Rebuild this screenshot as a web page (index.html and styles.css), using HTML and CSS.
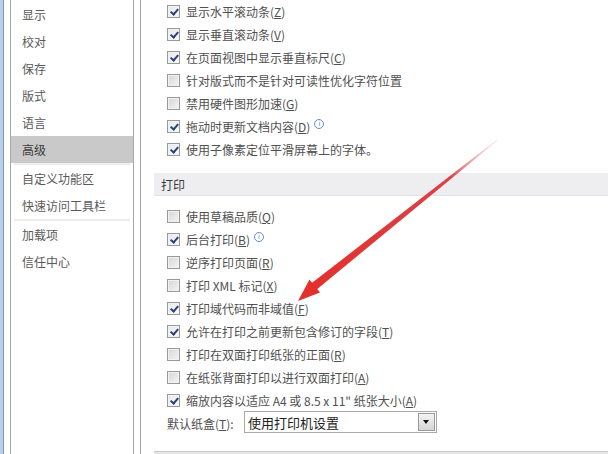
FILE: index.html
```html
<!DOCTYPE html>
<html>
    <head>
        <meta charset="utf-8">
        <title>Word 选项 - 高级</title>
        <link rel="stylesheet" href="styles.css">
    </head>
    <body>
        <div class="window">
            <div class="frame_edge"></div>
            <div class="nav">
                <ul class="nav_list">
                    <li>显示</li>
                    <li>校对</li>
                    <li>保存</li>
                    <li>版式</li>
                    <li>语言</li>
                    <li class="active">高级</li>
                    <li class="sep"></li>
                    <li>自定义功能区</li>
                    <li>快速访问工具栏</li>
                    <li class="sep"></li>
                    <li>加载项</li>
                    <li>信任中心</li>
                </ul>
            </div>
            <div class="content">
                <div class="row"><span class="cb on"></span>显示水平滚动条(<u>Z</u>)</div>
                <div class="row"><span class="cb on"></span>显示垂直滚动条(<u>V</u>)</div>
                <div class="row"><span class="cb on"></span>在页面视图中显示垂直标尺(<u>C</u>)</div>
                <div class="row"><span class="cb"></span>针对版式而不是针对可读性优化字符位置</div>
                <div class="row"><span class="cb"></span>禁用硬件图形加速(<u>G</u>)</div>
                <div class="row"><span class="cb on"></span>拖动时更新文档内容(<u>D</u>)<span class="info">i</span></div>
                <div class="row"><span class="cb on"></span>使用子像素定位平滑屏幕上的字体。</div>

                <div class="section">打印</div>

                <div class="row"><span class="cb"></span>使用草稿品质(<u>Q</u>)</div>
                <div class="row"><span class="cb on"></span>后台打印(<u>B</u>)<span class="info">i</span></div>
                <div class="row"><span class="cb"></span>逆序打印页面(<u>R</u>)</div>
                <div class="row"><span class="cb"></span>打印 XML 标记(<u>X</u>)</div>
                <div class="row"><span class="cb on"></span>打印域代码而非域值(<u>F</u>)</div>
                <div class="row"><span class="cb on"></span>允许在打印之前更新包含修订的字段(<u>T</u>)</div>
                <div class="row"><span class="cb"></span>打印在双面打印纸张的正面(<u>R</u>)</div>
                <div class="row"><span class="cb"></span>在纸张背面打印以进行双面打印(<u>A</u>)</div>
                <div class="row"><span class="cb on"></span>缩放内容以适应 A4 或 8.5 x 11" 纸张大小(<u>A</u>)</div>
                <div class="row tray">
                    <span class="tray_label">默认纸盒(<u>T</u>):</span>
                    <div class="select">
                        <span class="select_text">使用打印机设置</span>
                        <span class="select_btn"></span>
                    </div>
                </div>
                <div class="section next"></div>
            </div>
            <svg class="arrow" width="608" height="454" viewBox="0 0 608 454">
                <defs>
                    <linearGradient id="shaft" x1="497" y1="140" x2="310" y2="290" gradientUnits="userSpaceOnUse">
                        <stop offset="0" stop-color="#f2c4c6" stop-opacity="0.3"/>
                        <stop offset="0.25" stop-color="#d9434a"/>
                        <stop offset="1" stop-color="#e3312d"/>
                    </linearGradient>
                </defs>
                <polygon points="497,139.5 497.6,140.4 315.5,290.5 310.5,284" fill="url(#shaft)"/>
                <polygon points="298,301 320,292.5 309.5,279.5" fill="#e3302c"/>
            </svg>
        </div>
    </body>
</html>
```

FILE: styles.css
```css
body {
    margin:0;
    background:#fff;
    overflow:hidden;
    font-family:"Microsoft YaHei", "Noto Sans CJK SC", sans-serif;
    font-size:12px;
    color:#505050;
}
.window {
    position:relative;
    display:flex;
    width:608px;
    height:454px;
    overflow:hidden;
}
.frame_edge {
    width:3px;
    background:#b9d0ea;
    border-right:1px solid #8495aa;
}
.nav {
    width:130px;
    padding-left:6px;
}
.nav_list {
    list-style:none;
    margin:0;
    padding:1px 0 0;
    height:100%;
    border-left:1px solid #a6a6a6;
    border-right:1px solid #a6a6a6;
    box-sizing:border-box;
    width:124px;
}
.nav_list li {
    height:27px;
    line-height:27px;
    padding-left:11px;
    color:#5a5a5a;
}
.nav_list li.active {
    background:#c9c9c9;
    color:#3a3a3a;
}
.nav_list li.sep {
    height:2px;
    margin:0 3px;
    padding:0;
    background:#ececec;
}
.content {
    flex:1;
    border-left:1px solid #a3a3a3;
    padding-left:13px;
}
.row {
    display:flex;
    align-items:center;
    height:23px;
    padding-left:13px;
    white-space:nowrap;
}
.row u {
    text-decoration:underline;
    text-underline-offset:1px;
}
.cb {
    flex:none;
    position:relative;
    width:13px;
    height:13px;
    margin-right:6px;
    box-sizing:border-box;
    border:1px solid #999;
    background:linear-gradient(135deg, #d6d6d6, #f4f4f4);
    box-shadow:inset 0 0 0 1px #f2f2f2;
}
.cb.on {
    background:linear-gradient(135deg, #e4e8ee, #fbfbfb);
}
.cb.on::after {
    content:"";
    position:absolute;
    left:3.5px;
    top:0.5px;
    width:2.5px;
    height:6px;
    border-right:2px solid #2b4275;
    border-bottom:2px solid #2b4275;
    transform:rotate(40deg);
}
.info {
    display:inline-block;
    width:8px;
    height:8px;
    margin-left:4px;
    margin-bottom:5px;
    border:1px solid #6a8cc0;
    border-radius:50%;
    font-family:"DejaVu Sans", sans-serif;
    font-size:7px;
    line-height:8px;
    text-align:center;
    color:#5a7fb8;
}
.section {
    height:23px;
    line-height:23px;
    margin:12px 0 9px;
    padding-left:7px;
    background:#eeedef;
    border-bottom:1px solid #e2e1e3;
    box-sizing:border-box;
    color:#3a3a3a;
}
.section.next {
    margin:17px 0 0;
    background:#e6e6e6;
    border-top:1px solid #c9c9c9;
}
.tray {
    height:22px;
}
.tray_label {
    width:77px;
}
.select {
    display:flex;
    align-items:center;
    justify-content:space-between;
    width:193px;
    height:22px;
    margin-top:-2px;
    box-sizing:border-box;
    border:1px solid #a9a9a9;
    background:#fff;
    color:#222;
    font-size:13px;
}
.select_text {
    padding-left:3px;
}
.select_btn {
    position:relative;
    width:17px;
    height:18px;
    margin-right:1px;
    box-sizing:border-box;
    border:1px solid #9a9a9a;
    background:linear-gradient(#f4f4f4, #d4d4d4);
}
.select_btn::after {
    content:"";
    position:absolute;
    left:4px;
    top:6px;
    border-left:3.5px solid transparent;
    border-right:3.5px solid transparent;
    border-top:4px solid #111;
}
.arrow {
    position:absolute;
    left:0;
    top:0;
    pointer-events:none;
}
```
